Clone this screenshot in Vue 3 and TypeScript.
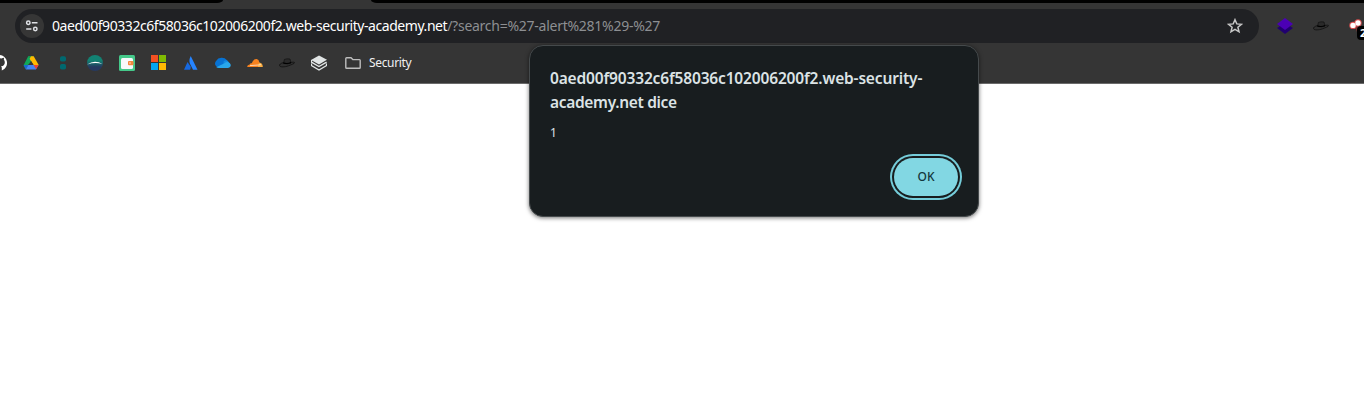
<script setup lang="ts">
const host = '0aed00f90332c6f58036c102006200f2.web-security-academy.net'
const query = '/?search=%27-alert%281%29-%27'
const hatCrown = 'M4.5 8.4 5.4 4.4Q8 3.4 11 4L12 8Q8.5 9.6 4.5 8.4Z'
const hatBrim = 'M4.4 7.6C1.5 8.3 .2 9.6 .6 10.8 1.2 12.3 5.8 12.2 9.5 10.8 12.5 9.6 15.4 8.8 15.6 7.6 15.4 7 13.8 7.2 12 7.3'
</script>

<template>
  <div class="window">
    <div class="tabs"><i class="strip left"></i><i class="strip right"></i></div>
    <header class="toolbar">
      <div class="omnibox">
        <span class="site">
          <svg width="14" height="14" viewBox="0 0 14 14" fill="none" stroke="#dfe1e5" stroke-width="1.5">
            <circle cx="3.3" cy="3.7" r="1.7" /><path d="M6.8 3.7h5.7M1.2 10h5.2" /><circle cx="10.3" cy="10" r="1.7" />
          </svg>
        </span>
        <span class="url"><span class="host">{{ host }}</span><span class="query">{{ query }}</span></span>
        <svg class="star" width="16" height="16" viewBox="0 0 16 16" fill="none" stroke="#c7c7c7" stroke-width="1.5">
          <path d="M8 1.7 9.8 5.9 14.4 6.3 10.9 9.3 12 13.8 8 11.4 4 13.8 5.1 9.3 1.6 6.3 6.2 5.9Z" />
        </svg>
      </div>
      <div class="extensions">
        <svg width="16" height="16" viewBox="0 0 16 16">
          <path d="M0 10 8 5 16 10 8 16Z" fill="#21006f" /><path d="M0 6 8 0 16 6 8 12Z" fill="#4b00b4" />
        </svg>
        <svg width="16" height="16" viewBox="0 0 16 16">
          <path :d="hatBrim" fill="#303030" stroke="#0c0c0c" stroke-width=".7" /><path :d="hatCrown" fill="#2a2a2a" stroke="#0c0c0c" stroke-width=".6" /><path d="M4.4 7.2Q8 8.8 12 7V8.3Q8 9.7 4.2 8.5Z" fill="#000" />
        </svg>
        <div class="counter">
          <svg width="16" height="16" viewBox="0 0 16 16">
            <path d="M6 8h5v5H8Z" fill="#793637" />
            <g fill="#d95050"><circle cx="4" cy="6.4" r="3.7" /><circle cx="9" cy="4" r="3.7" /></g>
            <g fill="#fff"><circle cx="4" cy="6.4" r="2.7" /><circle cx="9" cy="4" r="2.7" /></g>
          </svg>
          <b>2</b>
        </div>
      </div>
    </header>
    <nav class="bookmarks">
      <svg viewBox="0 0 16 16"><path fill="#fff" fill-rule="evenodd" d="M8 0A8 8 0 0 1 10.8 15.5V12.8Q10.8 11.8 10 11.3C12.8 10.9 13.8 9.6 13.8 7.2Q13.8 5.8 12.8 4.8 13.2 3.7 12.8 2.7 11.8 2.7 10.6 3.5 8 2.8 5.4 3.5L5.4 15.6A8 8 0 0 1 8 0Z" /></svg>
      <svg viewBox="0 0 16 16">
        <path d="M5.2 1.2H8L10.4 5.4 8 9.5H5.2L2.6 14 .6 10.2Z" fill="#10a75a" />
        <path d="M5.2 1.2H10.6L8 5.8Z" fill="#15984f" /><path d="M8 1.2h2.7L15.7 10H10.5L6.6 3.7Z" fill="#ffba00" />
        <path d="M.6 10.1H5.6L2.8 14.5Z" fill="#1967d2" /><path d="M5.3 10H15.5L12.9 14.4H2.8Z" fill="#4285f4" /><path d="M10.5 10H15.6L13.2 14.3Z" fill="#ea4335" />
        <path d="M8 5.7 10.5 10H5.4Z" fill="#353535" />
      </svg>
      <svg viewBox="0 0 16 16" fill="#006970"><rect x="5" y="1.2" width="6" height="5.4" rx="1.8" /><rect x="5" y="9" width="6" height="5.6" rx="1.8" /></svg>
      <svg viewBox="0 0 16 16">
        <defs><linearGradient id="sea" x2="0" y2="1"><stop offset=".35" stop-color="#128273" /><stop offset=".75" stop-color="#25395f" /></linearGradient></defs>
        <circle cx="8" cy="8" r="8" fill="url(#sea)" /><path d="M.2 9.5Q7.5 4.2 15.5 9 8 6.9 .2 9.5" fill="#fff" />
      </svg>
      <svg viewBox="0 0 16 16">
        <rect width="16" height="16" rx="1.5" fill="#45c98a" /><rect x="2" y="3" width="12" height="11" rx="1.5" fill="#f8f8fc" />
        <rect x="9" y="6" width="5.5" height="4.3" rx="1" fill="#f5863e" /><circle cx="11" cy="8" r=".8" fill="#ffe4cf" />
      </svg>
      <svg viewBox="0 0 16 16"><path fill="#f35022" d="M0 0h7v7H0z" /><path fill="#80bb03" d="M8 0h7v7H8z" /><path fill="#03a5f0" d="M0 8h7v7H0z" /><path fill="#ffb903" d="M8 8h7v7H8z" /></svg>
      <svg viewBox="0 0 16 16"><path fill="#1769e0" d="M4.5 7 7.4 11.2Q8.3 13 7 14.7H1Z" /><path fill="#2684ff" d="M7.7 1 14.5 14.7H10L7 8.8Q5.5 5.3 7.7 1Z" /></svg>
      <svg viewBox="0 0 16 16">
        <path fill="#0872d3" d="M3.2 12.5A4 4 0 0 1 1.3 5.7 6 5 0 0 1 11.8 5L12 8Z" /><path fill="#138be2" d="M8.7 6Q12.5 3.8 13.9 7.4L15.5 9.5 8 12.5Z" /><path fill="#29a7eb" d="M1.3 12.2 9.5 8.2Q11.5 6.4 13.9 7.4 16.5 9 15.4 11.6 14.6 13 13 13H3.8Q2.3 13 1.3 12.2Z" />
      </svg>
      <svg viewBox="0 0 16 16"><path fill="#f6821f" d="M.2 12Q.1 9.6 2.7 9.5 3 8 4.8 8.3 6.5 3.8 9.6 4.1 12 4.6 12.4 7.5L11.5 12Z" /><path fill="#fbad41" d="M12.2 7.6Q15.6 7.9 15.8 12H10.8L11.5 9Z" /><path d="M3 10.6 11.5 10 14 9.6" fill="none" stroke="#fff" stroke-width=".65" /></svg>
      <svg viewBox="0 0 16 16">
        <path :d="hatBrim" fill="#303030" stroke="#0c0c0c" stroke-width=".7" /><path :d="hatCrown" fill="#2a2a2a" stroke="#0c0c0c" stroke-width=".6" /><path d="M4.4 7.2Q8 8.8 12 7V8.3Q8 9.7 4.2 8.5Z" fill="#000" />
      </svg>
      <svg viewBox="0 0 16 16">
        <path d="M0 5 8 .5 16 4.8 8 9.5Z" fill="#e0e4e4" /><path d="M.4 5V7.2L8 11.5 15.6 7.2M.4 8.6V10.5L8 15 15.6 10.5V8.5" fill="none" stroke="#e0e4e4" stroke-width="1.4" />
      </svg>
      <div class="folder">
        <svg viewBox="0 0 16 16" fill="none" stroke="#bdbdbd" stroke-width="1.4"><path d="M1.6 2.8H6L7.8 4.6H14.5Q15.2 4.6 15.2 5.4V12.4Q15.2 13.3 14.4 13.3H1.6Q.8 13.3.8 12.4V3.6Q.8 2.8 1.6 2.8Z" /></svg>
        <span>Security</span>
      </div>
    </nav>
    <section class="dialog" role="alertdialog">
      <h1><span>0aed00f90332c6f58036c102006200f2.web-security-</span><br /><span class="second">academy.net dice</span></h1>
      <p>1</p>
      <button type="button">OK</button>
    </section>
  </div>
</template>

<style scoped>
.window { position: relative; height: 404px; overflow: hidden; background: #fff; font-family: "Noto Sans", "Open Sans", sans-serif; }
.tabs { display: flex; justify-content: space-between; height: 3px; background: #353535; }
.strip { display: block; background: #000; height: 3px; }
.left { width: 223px; border-bottom-right-radius: 6px 3px; }
.right { width: 993px; border-bottom-left-radius: 6px 3px; }
.toolbar { display: flex; height: 46px; padding: 6px 0 0 15px; background: #353535; box-sizing: border-box; }
.omnibox { display: flex; align-items: center; flex: none; width: 1244px; height: 34px; padding: 0 16px 0 5px; border-radius: 17px; background: #202124; box-sizing: border-box; }
.site { display: flex; align-items: center; justify-content: center; width: 24px; height: 24px; border-radius: 50%; background: #363636; }
.url { margin-left: 8px; font-size: 14px; line-height: 20px; white-space: nowrap; }
.host { color: #fff; letter-spacing: -.44px; }
.query { color: #8d8f92; letter-spacing: -.26px; }
.star { margin-left: auto; }
.extensions { display: flex; gap: 20px; flex: none; margin: 9px 0 0 18px; height: 16px; }
.counter { position: relative; width: 16px; height: 16px; }
.counter b { position: absolute; left: 8px; top: 8px; width: 16px; height: 14px; padding-left: 3px; border-radius: 4px; background: #000; color: #fff; font: bold 11px/14px "Noto Sans", sans-serif; }
.bookmarks { display: flex; align-items: center; gap: 16px; height: 35px; padding: 0 0 6px; background: #353535; border-bottom: 1px solid #6a6a6a; box-sizing: border-box; }
.bookmarks svg { width: 16px; height: 16px; flex: none; }
.bookmarks > svg:first-child { margin-left: -9px; }
.folder { display: flex; align-items: center; gap: 8px; margin-left: 2px; color: #f1f1f1; font-size: 12px; line-height: 16px; letter-spacing: -.35px; }
.dialog { position: absolute; left: 529px; top: 45px; width: 450px; height: 172px; padding: 20px 16px 0 20px; border: 1px solid #454a4c; border-radius: 14px; background: #181d1f; box-shadow: 0 1px 4px rgba(0, 0, 0, .55); box-sizing: border-box; color: #dce3e5; }
h1 { margin: 0; font-size: 15.5px; line-height: 24px; font-weight: 600; white-space: nowrap; letter-spacing: -.16px; }
.second { letter-spacing: -.32px; }
p { margin: 10px 0 0; font-size: 12px; line-height: 18px; }
button { display: block; width: 64px; height: 38px; margin: 16px 4px 0 auto; padding: 0; border: 0; border-radius: 19px; background: #82d7e3; color: #12363c; font: 500 12px/38px "Noto Sans", sans-serif; box-shadow: 0 0 0 2px #181d1f, 0 0 0 4px #75cdda; }
</style>
